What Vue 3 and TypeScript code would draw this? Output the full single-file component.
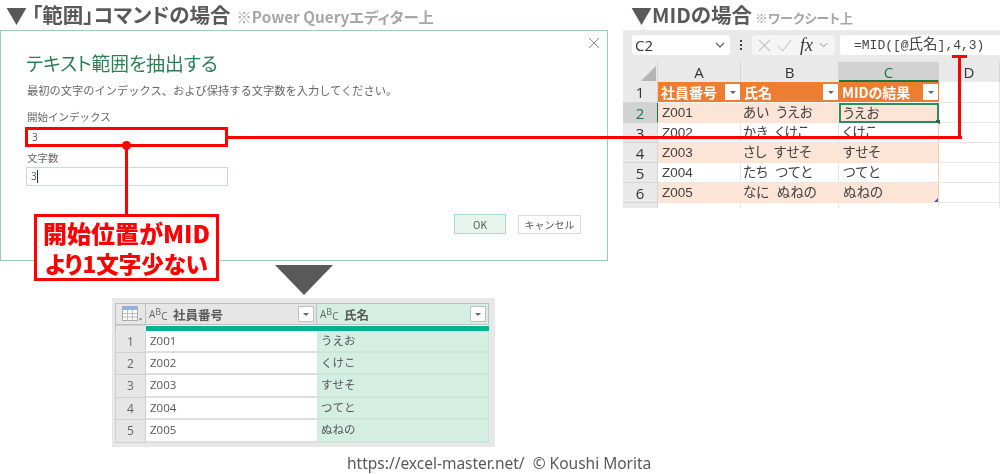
<script setup lang="ts">
const sheetRows = [
  { n: 2, a: 'Z001', b: 'あい  うえお', c: 'うえお' },
  { n: 3, a: 'Z002', b: 'かき  くけこ', c: 'くけこ' },
  { n: 4, a: 'Z003', b: 'さし  すせそ', c: 'すせそ' },
  { n: 5, a: 'Z004', b: 'たち  つてと', c: 'つてと' },
  { n: 6, a: 'Z005', b: 'なに  ぬねの', c: 'ぬねの' },
]
const queryRows = [
  { n: 1, a: 'Z001', b: 'うえお' },
  { n: 2, a: 'Z002', b: 'くけこ' },
  { n: 3, a: 'Z003', b: 'すせそ' },
  { n: 4, a: 'Z004', b: 'つてと' },
  { n: 5, a: 'Z005', b: 'ぬねの' },
]
const sheetHeads = ['社員番号', '氏名', 'MIDの結果']
const queryHeads = ['社員番号', '氏名']
</script>

<template>
  <div class="canvas">
    <h2 class="head head-left">
      <span class="tri-glyph">▼</span><span class="head-main">「範囲」コマンドの場合</span><small>※Power Queryエディター上</small>
    </h2>
    <h2 class="head head-right">
      <span class="tri-glyph">▼</span><span class="head-main">MIDの場合</span><small>※ワークシート上</small>
    </h2>

    <section class="dialog">
      <svg class="close" viewBox="0 0 10 10" width="10" height="10"><path d="M0 0L10 10M10 0L0 10" stroke="#7f7f7f" stroke-width="0.9" fill="none" /></svg>
      <h3>テキスト範囲を抽出する</h3>
      <p class="desc">最初の文字のインデックス、および保持する文字数を入力してください。</p>
      <label class="f-label first">開始インデックス</label>
      <div class="input">3</div>
      <label class="f-label second">文字数</label>
      <div class="input active">3<i class="caret"></i></div>
      <div class="buttons">
        <span class="btn ok">OK</span>
        <span class="btn cancel">キャンセル</span>
      </div>
    </section>

    <section class="excel">
      <div class="formula-bar">
        <div class="name-box"><span>C2</span>
          <svg viewBox="0 0 10 6" width="10" height="6"><path d="M1 1L5 5L9 1" stroke="#555" stroke-width="1.1" fill="none" /></svg>
        </div>
        <div class="dots"><i></i><i></i><i></i></div>
        <div class="fx-box">
          <svg viewBox="0 0 13 13" width="13" height="13"><path d="M1 1L12 12M12 1L1 12" stroke="#c4c4c4" stroke-width="1.1" fill="none" /></svg>
          <svg viewBox="0 0 15 13" width="15" height="13"><path d="M1 7L5.5 12L14 1" stroke="#c4c4c4" stroke-width="1.1" fill="none" /></svg>
          <span class="fx">fx</span>
          <svg viewBox="0 0 10 6" width="9" height="6"><path d="M1 1L5 5L9 1" stroke="#888" stroke-width="1" fill="none" /></svg>
        </div>
        <div class="formula">=MID([@<span class="cjk">氏名</span>],4,3)</div>
      </div>
      <div class="grid">
        <div class="corner"><i></i></div>
        <div class="col">A</div>
        <div class="col">B</div>
        <div class="col sel">C</div>
        <div class="col">D</div>

        <div class="rowh">1</div>
        <div v-for="h in sheetHeads" :key="h" class="th">
          <span>{{ h }}</span><b class="filter"><i></i></b>
        </div>
        <div class="cell"></div>

        <template v-for="r in sheetRows" :key="r.n">
          <div class="rowh" :class="{ sel: r.n === 2 }">{{ r.n }}</div>
          <div class="cell t a" :class="{ odd: r.n % 2 === 0 }">{{ r.a }}</div>
          <div class="cell t b" :class="{ odd: r.n % 2 === 0 }">{{ r.b }}</div>
          <div class="cell t c" :class="{ odd: r.n % 2 === 0, cur: r.n === 2, last: r.n === 6 }">{{ r.c }}</div>
          <div class="cell"></div>
        </template>

        <div class="rowh stub"></div>
        <div class="cell"></div>
        <div class="cell"></div>
        <div class="cell"></div>
        <div class="cell"></div>
      </div>
    </section>

    <div class="line start-h"></div>
    <div class="line formula-v"></div>
    <div class="line formula-cap"></div>
    <div class="box-highlight"></div>
    <div class="dot"></div>
    <div class="line call-v"></div>
    <div class="callout"><span class="call-a">開始位置がMID</span><span class="call-b">より1文字少ない</span></div>

    <div class="down"></div>

    <section class="query">
      <div class="q-grid">
        <div class="q-head q-corner">
          <svg viewBox="0 0 20 16" width="20" height="16">
            <rect x="0.5" y="0.5" width="15" height="14" fill="#fff" stroke="#a9a9a9" />
            <rect x="0.5" y="0.5" width="15" height="3.5" fill="#8fb2dc" />
            <path d="M5.5 4V14.5M10.5 4V14.5M1 7.5H15M1 11H15" stroke="#bdbdbd" stroke-width="1" />
            <path d="M17 12.5H20L18.5 14.5Z" fill="#666" />
          </svg>
        </div>
        <div v-for="(h, i) in queryHeads" :key="h" class="q-head" :class="{ green: i === 1 }">
          <span class="abc">A<sup>B</sup><sub>C</sub></span>
          <span class="q-title">{{ h }}</span>
          <b class="filter q-filter"><i></i></b>
        </div>
        <div class="q-stripe none"></div>
        <div class="q-stripe"></div>
        <div class="q-stripe"></div>
        <template v-for="r in queryRows" :key="r.n">
          <div class="q-num">{{ r.n }}</div>
          <div class="q-cell">{{ r.a }}</div>
          <div class="q-cell green">{{ r.b }}</div>
        </template>
      </div>
    </section>

    <footer class="credit">https://excel-master.net/&nbsp; © Koushi Morita</footer>
  </div>
</template>

<style>
html, body { margin: 0; background: #fff; }
</style>

<style scoped>
.canvas {
  position: relative;
  width: 1000px;
  height: 474px;
  overflow: hidden;
  background: #fff;
  font-family: "Noto Sans CJK JP", "Noto Sans", sans-serif;
  color: #595959;
  filter: blur(0.3px);
}
.head {
  position: absolute;
  margin: 0;
  display: flex;
  align-items: baseline;
  font-weight: 700;
  color: #595959;
  white-space: nowrap;
  line-height: 28px;
}
.head-left { left: 6px; top: 0; }
.head-right { left: 631px; top: 0; }
.tri-glyph { font-size: 21px; }
.head-left .head-main { font-size: 20.5px; font-feature-settings: "palt"; margin-left: 5px; }
.head-right .head-main { font-size: 20.5px; font-feature-settings: "palt"; }
.head small {
  font-size: 15.3px;
  font-weight: 700;
  color: #a6a6a6;
  margin-left: 6px;
  font-feature-settings: "palt";
}
.head-right small { font-size: 13px; margin-left: 3px; }

.dialog {
  position: absolute;
  left: 0;
  top: 30px;
  width: 606px;
  height: 229px;
  border: 1px solid #9fcdb3;
  box-sizing: content-box;
  background: #fff;
  padding: 0;
}
.close { position: absolute; left: 588px; top: 7px; }
.dialog h3 {
  margin: 20px 0 0 25px;
  font-size: 18.8px;
  line-height: 24px;
  font-weight: 400;
  color: #2f7d57;
  font-feature-settings: "palt";
}
.desc {
  margin: 7px 0 0 26px;
  font-size: 11.25px;
  line-height: 16px;
  color: #666;
}
.f-label {
  display: block;
  font-size: 10.5px;
  line-height: 14px;
  color: #666;
}
.f-label.first { margin-top: 12px; margin-left: 26px; }
.f-label.second { margin-top: 4px; margin-left: 26px; }
.input {
  margin: 4px 0 0 26px;
  width: 199px;
  height: 17px;
  border: 1px solid transparent;
  font-size: 10px;
  line-height: 17px;
  padding-left: 4px;
  color: #555;
  font-family: "Open Sans", sans-serif;
  box-sizing: content-box;
}
.input.active {
  margin-top: 2px;
  margin-left: 25px;
  border: 1px solid #bfe2d0;
  padding-left: 4px;
  width: 196px;
}
.caret {
  display: inline-block;
  width: 1px;
  height: 13px;
  background: #333;
  vertical-align: -3px;
}
.buttons {
  position: absolute;
  left: 453px;
  top: 183px;
  display: flex;
  align-items: center;
  gap: 12px;
}
.btn {
  display: flex;
  align-items: center;
  justify-content: center;
  box-sizing: border-box;
  font-size: 10px;
  color: #555;
}
.btn.ok { width: 52px; height: 20px; background: #e8f4ee; border: 1px solid #a8dcc3; }
.btn.cancel { width: 63px; height: 19px; background: #fff; border: 1px solid #d9d9d9; }

.excel {
  position: absolute;
  left: 623px;
  top: 30px;
  width: 377px;
  height: 178px;
  background: #fff;
  overflow: hidden;
  font-family: "Liberation Sans", "Noto Sans CJK JP", sans-serif;
}
.formula-bar {
  height: 32px;
  background: #e9e9e9;
  display: flex;
  align-items: flex-start;
  padding: 5px 0 0 9px;
  box-sizing: border-box;
}
.name-box {
  width: 98px;
  height: 20px;
  background: #fff;
  border-radius: 3px;
  display: flex;
  align-items: center;
  justify-content: space-between;
  padding: 0 5px 0 3px;
  box-sizing: border-box;
  font-family: "Open Sans", sans-serif;
  font-size: 15px;
  color: #333;
}
.dots {
  width: 22px;
  height: 20px;
  display: flex;
  flex-direction: column;
  align-items: center;
  justify-content: center;
  gap: 2px;
}
.dots i { width: 2px; height: 2px; background: #444; }
.fx-box {
  width: 83px;
  height: 20px;
  background: #f5f5f5;
  border-radius: 3px;
  display: flex;
  align-items: center;
  gap: 6px;
  padding-left: 6px;
  box-sizing: border-box;
}
.fx {
  font-family: "Liberation Serif", serif;
  font-style: italic;
  font-weight: 400;
  font-size: 18px;
  color: #333;
  margin-left: 2px;
  margin-right: -5px;
  width: 18px;
  line-height: 20px;
}
.formula {
  margin-left: 5px;
  flex: 1;
  height: 20px;
  background: #fff;
  border-radius: 3px 0 0 3px;
  font-family: "Liberation Mono", "Noto Sans CJK JP", monospace;
  font-size: 13px;
  line-height: 20px;
  padding-left: 14px;
  color: #444;
  white-space: pre;
}
.formula .cjk { font-size: 14.5px; }

.grid {
  display: grid;
  grid-template-columns: 35px 83px 98px 100px 61px;
  grid-template-rows: 20px 21px 20px 20px 20px 20px 20px 6px;
}
.corner { background: #e9e9e9; position: relative; border-right: 1px solid #d4d4d4; }
.corner i {
  position: absolute;
  right: 1px;
  bottom: 1px;
  width: 15px;
  height: 15px;
  background: #b4b4b4;
  clip-path: polygon(100% 0, 100% 100%, 0 100%);
}
.col {
  background: #e9e9e9;
  border-right: 1px solid #d4d4d4;
  box-sizing: border-box;
  text-align: center;
  font-family: "Open Sans", sans-serif;
  font-size: 15px;
  line-height: 20px;
  color: #333;
}
.col.sel { background: #d2d2d2; color: #217346; border-bottom: 2px solid #217346; }
.rowh {
  background: #e9e9e9;
  border-bottom: 1px solid #d4d4d4;
  border-right: 1px solid #d4d4d4;
  box-sizing: border-box;
  text-align: center;
  font-family: "Open Sans", sans-serif;
  font-size: 15px;
  line-height: 20px;
  color: #333;
}
.rowh.sel { background: #d2d2d2; color: #217346; border-right: 1px solid #217346; }
.th {
  background: #ed7d31;
  color: #fff;
  font-family: "Noto Sans CJK JP", sans-serif;
  font-weight: 700;
  font-size: 14px;
  line-height: 20px;
  display: flex;
  align-items: center;
  justify-content: space-between;
  padding: 0 1px 0 3px;
  margin-bottom: 1px;
  font-feature-settings: "palt";
  white-space: nowrap;
}
.filter {
  display: flex;
  align-items: center;
  justify-content: center;
  width: 15px;
  height: 16px;
  background: #fff;
  flex: none;
}
.filter i {
  width: 0;
  height: 0;
  border-left: 3px solid transparent;
  border-right: 3px solid transparent;
  border-top: 3px solid #666;
}
.cell {
  border-right: 1px solid #e6e6e6;
  border-bottom: 1px solid #e6e6e6;
  box-sizing: border-box;
  background: #fff;
}
.cell.t {
  font-family: "Liberation Sans", "Noto Sans CJK JP", sans-serif;
  font-size: 13.5px;
  line-height: 19px;
  padding-left: 4px;
  color: #404040;
  white-space: pre;
  font-feature-settings: "palt";
}
.cell.b { padding-left: 2px; }
.cell.odd { background: #fce4d6; border-right-color: #fce4d6; border-bottom-color: #fce4d6; }
.cell.c { border-right-color: #f8cbad; position: relative; }
.cell.cur { border: 2px solid #2f8a5f; padding-left: 2px; line-height: 17px; }
.cell.cur::after {
  content: "";
  position: absolute;
  right: -3px;
  bottom: -3px;
  width: 4px;
  height: 4px;
  background: #217346;
}
.cell.last::after {
  content: "";
  position: absolute;
  right: 0;
  bottom: 0;
  width: 4px;
  height: 4px;
  background: #3f5fa8;
  clip-path: polygon(100% 0, 100% 100%, 0 100%);
}
.stub { border-bottom: none; }

.line { position: absolute; background: #ff0000; }
.start-h { left: 228px; top: 136px; width: 734px; height: 3px; }
.formula-v { left: 958px; top: 57px; width: 3px; height: 82px; }
.formula-cap { left: 952px; top: 55px; width: 15px; height: 3px; }
.box-highlight {
  position: absolute;
  left: 25px;
  top: 127px;
  width: 203px;
  height: 20px;
  box-sizing: border-box;
  border: 3px solid #ff0000;
}
.dot {
  position: absolute;
  left: 122px;
  top: 141px;
  width: 9px;
  height: 9px;
  border-radius: 50%;
  background: #ff0000;
}
.call-v { left: 125px; top: 148px; width: 3px; height: 67px; }
.callout {
  position: absolute;
  left: 34px;
  top: 214px;
  width: 185px;
  height: 67px;
  box-sizing: border-box;
  border: 3px solid #ff0000;
  background: #fff;
  color: #ff0000;
  font-weight: 900;
  display: flex;
  flex-direction: column;
  align-items: center;
  justify-content: center;
  white-space: nowrap;
  font-feature-settings: "palt";
}
.call-a { font-size: 24px; line-height: 30px; }
.call-b { font-size: 22.5px; line-height: 30px; }
.down {
  position: absolute;
  left: 275px;
  top: 265px;
  width: 58px;
  height: 30px;
  background: #595959;
  clip-path: polygon(0 0, 100% 0, 50% 100%);
}

.query {
  position: absolute;
  left: 112px;
  top: 298px;
  width: 383px;
  height: 149px;
  background: #e8e8e8;
  padding: 5px 0 0 3px;
  box-sizing: border-box;
}
.q-grid {
  display: grid;
  grid-template-columns: 31px 171px 172px;
  grid-template-rows: 22px 6px 22px 22px 23px 22px 23px;
  width: 374px;
  background: #fff;
}
.q-head {
  background: #e6e6e6;
  border: 1px solid #bfbfbf;
  border-left: none;
  box-sizing: border-box;
  display: flex;
  align-items: center;
  position: relative;
  padding-left: 3px;
}
.q-head.green { background: #d4efe1; }
.q-corner { padding-left: 6px; border-left: 1px solid #bfbfbf; }
.abc {
  font-family: "Open Sans", sans-serif;
  font-size: 10px;
  color: #666;
  width: 24px;
  flex: none;
}
.abc sup { font-size: 9px; vertical-align: 3px; line-height: 0; }
.abc sub { font-size: 10px; vertical-align: -2px; line-height: 0; }
.q-title { font-size: 12.5px; font-weight: 700; color: #595959; }
.q-filter {
  position: absolute;
  right: 2px;
  top: 2px;
  width: 16px;
  height: 16px;
  border: 1px solid #bfbfbf;
  box-sizing: border-box;
}
.q-stripe { background: #00b294; border-top: 1px solid #fff; box-sizing: border-box; }
.q-stripe.none { background: #e6e6e6; border-top: 1px solid #d0d0d0; border-left: 1px solid #bfbfbf; }
.q-num {
  background: #e6e6e6;
  border: 1px solid #cfcfcf;
  border-top: none;
  box-sizing: border-box;
  text-align: center;
  font-family: "Open Sans", sans-serif;
  font-size: 12px;
  line-height: 21px;
  color: #666;
}
.q-cell {
  border-bottom: 2px solid #dedede;
  box-sizing: border-box;
  font-size: 11.5px;
  line-height: 20px;
  padding-left: 4px;
  color: #555;
  font-family: "Open Sans", "Noto Sans CJK JP", sans-serif;
}
.q-cell.green { background: #d4efe1; border-bottom-color: #c9e6d7; border-right: 1px solid #c9e6d7; }
.credit {
  position: absolute;
  left: 347px;
  top: 453px;
  font-family: "Noto Sans", sans-serif;
  font-size: 15.5px;
  line-height: 20px;
  color: #595959;
  white-space: nowrap;
}
</style>
